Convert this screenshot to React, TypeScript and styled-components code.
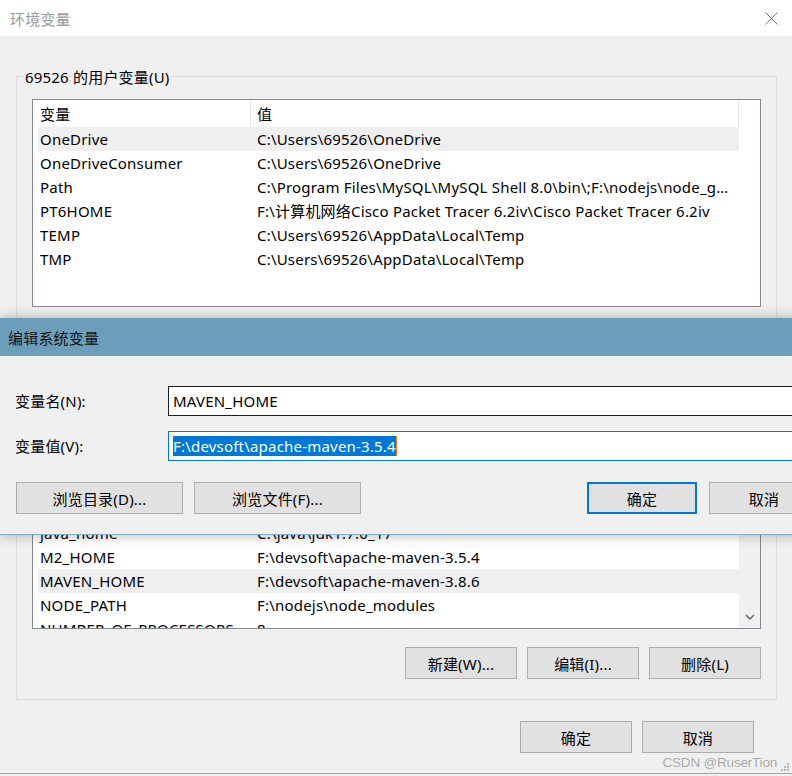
import styled, { createGlobalStyle } from 'styled-components';

const FONT = `"Noto Sans", "Noto Sans CJK SC", sans-serif`;

const GlobalStyle = createGlobalStyle`
  html, body {
    margin: 0;
    padding: 0;
    background: #f0f0f0;
  }
  * {
    box-sizing: border-box;
  }
`;

const Window = styled.div`
  position: relative;
  width: 792px;
  height: 776px;
  overflow: hidden;
  background: #f0f0f0;
  font-family: ${FONT};
  font-size: 15px;
  letter-spacing: 0.2px;
  color: #000;
`;

const TitleBar = styled.div`
  height: 36px;
  background: #fff;
  display: flex;
  align-items: center;
  justify-content: space-between;
  padding: 0 14px 0 10px;
`;

const TitleText = styled.span`
  color: #999;
  font-size: 15px;
`;

const Body = styled.div`
  padding: 40px 15px 20px 16px;
  display: flex;
  flex-direction: column;
  border-bottom: 1px solid #a3a3a3;
`;

const GroupBox = styled.div<{ $gapTop?: number; $padBottom: number }>`
  border: 1px solid #dcdcdc;
  padding: 0 15px ${({ $padBottom }) => $padBottom}px;
  margin-top: ${({ $gapTop }) => $gapTop ?? 0}px;
`;

const GroupTitle = styled.div`
  display: table;
  margin: -10px 0 0 -8px;
  padding: 0 1px;
  line-height: 20px;
  background: #f0f0f0;
`;

const ListView = styled.div`
  margin-top: 12px;
  height: 208px;
  border: 1px solid #828790;
  background: #fff;
  display: flex;
  overflow: hidden;
`;

const ListMain = styled.div`
  width: 706px;
  flex: none;
`;

const Header = styled.div`
  display: flex;
  height: 27px;
  align-items: center;
`;

const HeaderCell = styled.div<{ $w: number; $pad: number }>`
  width: ${({ $w }) => $w}px;
  height: 100%;
  display: flex;
  align-items: center;
  padding-left: ${({ $pad }) => $pad}px;
  border-right: 1px solid #e5e5e5;
`;

const Row = styled.div<{ $selected?: boolean }>`
  display: flex;
  height: 24px;
  align-items: center;
  margin-left: 5px;
  background: ${({ $selected }) => ($selected ? '#efefef' : 'transparent')};
`;

const Cell = styled.div<{ $w: number; $pad: number }>`
  width: ${({ $w }) => $w}px;
  padding: 0 8px 0 ${({ $pad }) => $pad}px;
  white-space: nowrap;
  overflow: hidden;
  text-overflow: ellipsis;
  line-height: 24px;
`;

const ScrollBar = styled.div`
  flex: 1;
  background: #f0f0f0;
  display: flex;
  flex-direction: column;
  justify-content: flex-end;
  align-items: center;
  padding-bottom: 8px;
`;

const ButtonRow = styled.div<{ $top: number; $gap: number }>`
  display: flex;
  justify-content: flex-end;
  gap: ${({ $gap }) => $gap}px;
  margin-top: ${({ $top }) => $top}px;
`;

const Button = styled.button<{ $w: number; $default?: boolean }>`
  width: ${({ $w }) => $w}px;
  height: 32px;
  background: #e1e1e1;
  border: ${({ $default }) => ($default ? '2px solid #0078d7' : '1px solid #adadad')};
  font-family: ${FONT};
  font-size: 15px;
  letter-spacing: 0.2px;
  color: #000;
  padding: 0;
  flex: none;
`;

const FooterRow = styled(ButtonRow)`
  margin-right: 23px;
`;

const Dialog = styled.div`
  position: absolute;
  top: 318px;
  left: 0;
  width: 835px;
  background: #f0f0f0;
  border-bottom: 1px solid #84aec5;
  box-shadow: 0 0 12px rgba(0, 0, 0, 0.3);
`;

const DialogTitle = styled.div`
  height: 38px;
  background: #6b9fb9;
  display: flex;
  align-items: center;
  padding-left: 8px;
  color: #111;
`;

const DialogBody = styled.div`
  padding: 30px 16px 20px 15px;
  display: flex;
  flex-direction: column;
`;

const FieldGrid = styled.div`
  display: grid;
  grid-template-columns: 153px 1fr;
  row-gap: 15px;
  align-items: center;
`;

const FieldLabel = styled.label`
  line-height: 30px;
`;

const TextBox = styled.div<{ $focused?: boolean }>`
  height: 30px;
  background: #fff;
  border: 1px solid ${({ $focused }) => ($focused ? '#0078d7' : '#1e1e1e')};
  display: flex;
  align-items: center;
  padding-left: 4px;
  white-space: nowrap;
`;

const Selection = styled.span`
  background: #0078d7;
  color: #fff;
  line-height: 20px;
  border-right: 1px solid #f07a1a;
`;

const DialogButtons = styled.div`
  display: flex;
  align-items: center;
  margin-top: 21px;
  padding-left: 1px;
  gap: 11px;
`;

const Spacer = styled.div`
  flex: 1;
`;

const Watermark = styled.div`
  position: absolute;
  right: 15px;
  bottom: 6px;
  font-family: "Liberation Sans", Arial, sans-serif;
  font-size: 13.5px;
  letter-spacing: -0.2px;
  color: rgba(120, 120, 120, 0.6);
`;

const Grip = styled.svg`
  position: absolute;
  right: 2px;
  bottom: 4px;
`;

type Entry = [string, string];

const userVars: Entry[] = [
  ['OneDrive', 'C:\\Users\\69526\\OneDrive'],
  ['OneDriveConsumer', 'C:\\Users\\69526\\OneDrive'],
  ['Path', 'C:\\Program Files\\MySQL\\MySQL Shell 8.0\\bin\\;F:\\nodejs\\node_global;C:\\Users\\69526'],
  ['PT6HOME', 'F:\\计算机网络Cisco Packet Tracer 6.2iv\\Cisco Packet Tracer 6.2iv'],
  ['TEMP', 'C:\\Users\\69526\\AppData\\Local\\Temp'],
  ['TMP', 'C:\\Users\\69526\\AppData\\Local\\Temp'],
];

const systemVars: Entry[] = [
  ['CLASSPATH', '.;%JAVA_HOME%\\lib'],
  ['ComSpec', 'C:\\WINDOWS\\system32\\cmd.exe'],
  ['DriverData', 'C:\\Windows\\System32\\Drivers\\DriverData'],
  ['java_home', 'C:\\java\\jdk1.7.0_17'],
  ['M2_HOME', 'F:\\devsoft\\apache-maven-3.5.4'],
  ['MAVEN_HOME', 'F:\\devsoft\\apache-maven-3.8.6'],
  ['NODE_PATH', 'F:\\nodejs\\node_modules'],
  ['NUMBER_OF_PROCESSORS', '8'],
];

const VarList = ({ rows, selected, scroll }: { rows: Entry[]; selected: number; scroll?: boolean }) => (
  <ListView>
    <ListMain>
      <Header>
        <HeaderCell $w={218} $pad={7}>变量</HeaderCell>
        <HeaderCell $w={488} $pad={6}>值</HeaderCell>
      </Header>
      {rows.map(([name, value], i) => (
        <Row key={name} $selected={i === selected}>
          <Cell $w={213} $pad={2}>{name}</Cell>
          <Cell $w={488} $pad={6}>{value}</Cell>
        </Row>
      ))}
    </ListMain>
    {scroll && (
      <ScrollBar>
        <svg width="10" height="6" viewBox="0 0 10 6">
          <polyline points="1,1 5,5 9,1" fill="none" stroke="#606060" strokeWidth="1.4" />
        </svg>
      </ScrollBar>
    )}
  </ListView>
);

const App = () => {
  return (
    <Window>
      <GlobalStyle />
      <TitleBar>
        <TitleText>环境变量</TitleText>
        <svg width="13" height="13" viewBox="0 0 13 13">
          <path d="M0.5 0.5 L12.5 12.5 M12.5 0.5 L0.5 12.5" stroke="#777" strokeWidth="1" />
        </svg>
      </TitleBar>
      <Body>
        <GroupBox $padBottom={20}>
          <GroupTitle>69526 的用户变量(U)</GroupTitle>
          <VarList rows={userVars} selected={0} />
          <ButtonRow $top={18} $gap={10}>
            <Button $w={112}>新建(N)...</Button>
            <Button $w={112}>编辑(E)...</Button>
            <Button $w={112}>删除(D)</Button>
          </ButtonRow>
        </GroupBox>
        <GroupBox $gapTop={20} $padBottom={20}>
          <GroupTitle>系统变量(S)</GroupTitle>
          <VarList rows={systemVars} selected={5} scroll />
          <ButtonRow $top={18} $gap={10}>
            <Button $w={112}>新建(W)...</Button>
            <Button $w={112}>编辑(I)...</Button>
            <Button $w={112}>删除(L)</Button>
          </ButtonRow>
        </GroupBox>
        <FooterRow $top={21} $gap={10}>
          <Button $w={112}>确定</Button>
          <Button $w={112}>取消</Button>
        </FooterRow>
      </Body>

      <Dialog>
        <DialogTitle>编辑系统变量</DialogTitle>
        <DialogBody>
          <FieldGrid>
            <FieldLabel>变量名(N):</FieldLabel>
            <TextBox>MAVEN_HOME</TextBox>
            <FieldLabel>变量值(V):</FieldLabel>
            <TextBox $focused>
              <Selection>F:\devsoft\apache-maven-3.5.4</Selection>
            </TextBox>
          </FieldGrid>
          <DialogButtons>
            <Button $w={167}>浏览目录(D)...</Button>
            <Button $w={167}>浏览文件(F)...</Button>
            <Spacer />
            <Button $w={110} $default>确定</Button>
            <Button $w={110} style={{ marginLeft: 1 }}>取消</Button>
          </DialogButtons>
        </DialogBody>
      </Dialog>

      <Watermark>CSDN @RuserTion</Watermark>
      <Grip width="9" height="9" viewBox="0 0 9 9">
        <g fill="#b8b8b8">
          <rect x="6" y="0" width="2" height="2" />
          <rect x="3" y="3" width="2" height="2" />
          <rect x="6" y="3" width="2" height="2" />
          <rect x="0" y="6" width="2" height="2" />
          <rect x="3" y="6" width="2" height="2" />
          <rect x="6" y="6" width="2" height="2" />
        </g>
      </Grip>
    </Window>
  );
};

export default App;
